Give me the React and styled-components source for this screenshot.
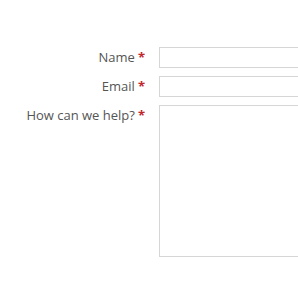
import styled, { createGlobalStyle } from "styled-components";

const GlobalStyle = createGlobalStyle`
  body {
    margin: 0;
    background: #fff;
    font-family: "Open Sans", sans-serif;
  }
`;

const Page = styled.div`
  width: 298px;
  height: 298px;
  overflow: hidden;
`;

const Form = styled.form`
  display: grid;
  grid-template-columns: 145px 1fr;
  column-gap: 14px;
  row-gap: 8px;
  padding-top: 47px;
`;

const Label = styled.label`
  justify-self: end;
  font-size: 13px;
  color: #555;
  line-height: 20px;
`;

const Required = styled.span`
  color: #c1272d;
  font-weight: 700;
  margin-left: 3px;
`;

const Input = styled.input`
  box-sizing: border-box;
  width: 180px;
  height: 21px;
  border: 1px solid #d6d6d6;
  padding: 2px 4px;
  margin: 0;
  font: inherit;
`;

const TextArea = styled.textarea`
  box-sizing: border-box;
  display: block;
  width: 180px;
  height: 152px;
  border: 1px solid #d6d6d6;
  margin: 0;
  resize: none;
  font: inherit;
`;

export default function App() {
  return (
    <Page>
      <GlobalStyle />
      <Form>
        <Label>
          Name<Required>*</Required>
        </Label>
        <Input type="text" />
        <Label>
          Email<Required>*</Required>
        </Label>
        <Input type="email" />
        <Label>
          How can we help?<Required>*</Required>
        </Label>
        <TextArea />
      </Form>
    </Page>
  );
}
